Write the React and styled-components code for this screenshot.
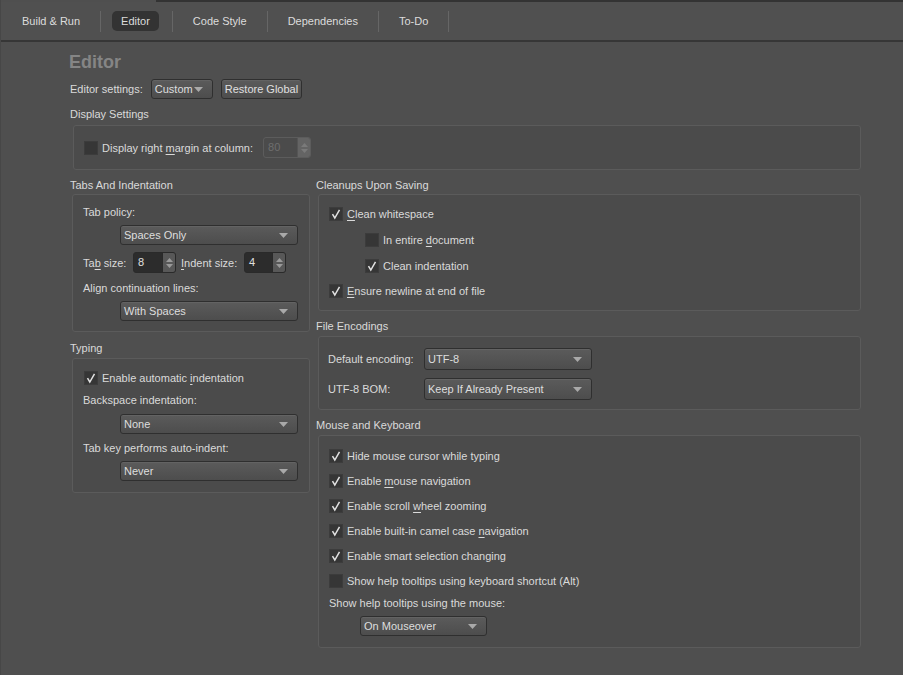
import React from "react";
import styled, { createGlobalStyle } from "styled-components";

const Global = createGlobalStyle`
  html, body { margin: 0; padding: 0; background: #4f4f4f; }
  body { font-family: "Liberation Sans", Arial, sans-serif; font-size: 11px; color: #dadada; }
  u { text-decoration-thickness: 1px; text-underline-offset: 2px; }
`;

const Window = styled.div`
  width: 903px;
  height: 675px;
  background: #4f4f4f;
  display: flex;
  flex-direction: column;
  overflow: hidden;
  border-left: 1px solid #474747;
  box-sizing: border-box;
`;

const TopEdge = styled.div`
  height: 2px;
  display: flex;
  & > span { margin-left: 155px; flex: 1; background: #333; }
`;

const TabBar = styled.div`
  height: 38px;
  display: flex;
  align-items: center;
  padding-left: 1px;
  border-bottom: 2px solid #363636;
  background: #505050;
`;

const Tab = styled.div`
  height: 20px;
  line-height: 20px;
  padding: 0 9px;
  margin: 0 ${p => (p.$active ? "13px" : "11px")} 0 11px;
  border-radius: 5px;
  background: ${p => (p.$active ? "#333333" : "transparent")};
  color: #dcdcdc;
  font-size: 11px;
`;

const Sep = styled.div`
  width: 1px;
  height: 21px;
  background: #666;
`;

const Content = styled.div`
  padding: 9px 0 0 68px;
  width: 792px;
  display: flex;
  flex-direction: column;
`;

const Title = styled.div`
  font-size: 18px;
  font-weight: bold;
  color: #858585;
  height: 22px;
  line-height: 22px;
`;

const Row = styled.div`
  display: flex;
  align-items: center;
  gap: ${p => p.$gap || 0}px;
  height: ${p => p.$h || 20}px;
  margin-top: ${p => p.$mt || 0}px;
  padding-left: ${p => p.$pl || 0}px;
`;

const Label = styled.span`
  color: #dadada;
  white-space: nowrap;
  width: ${p => (p.$w ? p.$w + "px" : "auto")};
  padding-left: ${p => p.$pl || 0}px;
  flex-shrink: 0;
`;

const SectionTitle = styled.div`
  height: 16px;
  line-height: 16px;
  margin-top: ${p => p.$mt || 0}px;
  margin-left: ${p => p.$ml || 0}px;
  color: #dadada;
`;

const Box = styled.div`
  margin-top: ${p => p.$mt || 0}px;
  margin-left: ${p => p.$ml || 2}px;
  border: 1px solid #5b5b5b;
  border-radius: 3px;
  background: #4b4b4b;
  padding: ${p => p.$pad || "0 10px"};
  display: flex;
  flex-direction: column;
  height: ${p => (p.$h ? p.$h + "px" : "auto")};
  box-sizing: border-box;
`;

const Columns = styled.div`
  display: flex;
  gap: 6px;
  margin-top: 7px;
`;

const Column = styled.div`
  display: flex;
  flex-direction: column;
  width: ${p => (p.$w ? p.$w + "px" : "auto")};
  flex: ${p => (p.$w ? "none" : 1)};
`;

const CheckBoxBox = styled.span`
  width: 14px;
  height: 14px;
  box-sizing: border-box;
  background: #363636;
  border: 1px solid #3c3c3c;
  display: inline-flex;
  align-items: center;
  justify-content: center;
  flex-shrink: 0;
`;

const CheckRow = styled.div`
  display: flex;
  align-items: center;
  gap: 4px;
  height: 16px;
  margin-top: ${p => p.$mt || 0}px;
  margin-left: ${p => p.$ml || 0}px;
`;

function Check({ checked, children, mt, ml }) {
  return (
    <CheckRow $mt={mt} $ml={ml}>
      <CheckBoxBox>
        {checked && (
          <svg width="12" height="12" viewBox="0 0 12 12">
            <path d="M2.5 6.2 L4.8 10 L9.5 1.8" fill="none" stroke="#e2e2e2" strokeWidth="1.5" />
          </svg>
        )}
      </CheckBoxBox>
      <Label>{children}</Label>
    </CheckRow>
  );
}

const ComboBox = styled.div`
  width: ${p => p.$w}px;
  height: ${p => p.$h || 20}px;
  box-sizing: border-box;
  border: 1px solid #2f2f2f;
  border-radius: 3px;
  background: linear-gradient(#5b5b5b, #4d4d4d);
  box-shadow: inset 0 1px 0 #636363;
  display: flex;
  align-items: center;
  padding: 0 9px 0 3px;
  margin-left: ${p => p.$ml || 0}px;
  margin-top: ${p => p.$mt || 0}px;
  flex-shrink: 0;
  & > span { flex: 1; white-space: nowrap; color: #dedede; }
`;

function Combo({ w, h, ml, mt, children }) {
  return (
    <ComboBox $w={w} $h={h} $ml={ml} $mt={mt}>
      <span>{children}</span>
      <svg width="9" height="5" viewBox="0 0 9 5">
        <path d="M0 0 H9 L4.5 5 Z" fill="#a9a9a9" />
      </svg>
    </ComboBox>
  );
}

const Button = styled.div`
  height: 20px;
  box-sizing: border-box;
  border: 1px solid #2f2f2f;
  border-radius: 3px;
  background: linear-gradient(#5b5b5b, #4d4d4d);
  box-shadow: inset 0 1px 0 #636363;
  padding: 0 3px;
  line-height: 18px;
  color: #e0e0e0;
`;

const SpinBox = styled.div`
  width: ${p => p.$w}px;
  height: 21px;
  box-sizing: border-box;
  border: 1px solid ${p => (p.$disabled ? "#5c5c5c" : "#2a2a2a")};
  border-radius: 3px;
  background: ${p => (p.$disabled ? "#4b4b4b" : "#2c2c2c")};
  display: flex;
  overflow: hidden;
  flex-shrink: 0;
  & > span { flex: 1; padding-left: 4px; line-height: 19px; color: ${p => (p.$disabled ? "#6e6e6e" : "#e0e0e0")}; }
`;

const SpinButtons = styled.div`
  width: 12px;
  background: ${p => (p.$disabled ? "#646464" : "#585858")};
  display: flex;
  align-items: center;
  justify-content: center;
  border-left: 1px solid ${p => (p.$disabled ? "#555" : "#2a2a2a")};
`;

function Spin({ w, value, disabled }) {
  const c = disabled ? "#7a7a7a" : "#9a9a9a";
  return (
    <SpinBox $w={w} $disabled={disabled}>
      <span>{value}</span>
      <SpinButtons $disabled={disabled}>
        <svg width="7" height="12" viewBox="0 0 7 12">
          <path d="M0 5 L3.5 1 L7 5 Z" fill={c} />
          <path d="M0 7 L3.5 11 L7 7 Z" fill={c} />
        </svg>
      </SpinButtons>
    </SpinBox>
  );
}

const tabs = ["Build & Run", "Editor", "Code Style", "Dependencies", "To-Do"];

export default function App() {
  return (
    <>
      <Global />
      <Window>
        <TopEdge><span /></TopEdge>
        <TabBar>
          {tabs.map(t => (
            <React.Fragment key={t}>
              <Tab $active={t === "Editor"}>{t}</Tab>
              <Sep />
            </React.Fragment>
          ))}
        </TabBar>
        <Content>
          <Title>Editor</Title>
          <Row $gap={8} $mt={6} $pl={1}>
            <Label>Editor settings:</Label>
            <Combo w={62}>Custom</Combo>
            <Button>Restore Global</Button>
          </Row>
          <SectionTitle $mt={7} $ml={1}>Display Settings</SectionTitle>
          <Box $mt={3} $ml={4} $h={45} $pad="0 10px">
            <Row $h={43} $gap={10}>
              <Check>Display right <u>m</u>argin at column:</Check>
              <Spin w={48} value="80" disabled />
            </Row>
          </Box>
          <Columns>
            <Column $w={241}>
              <SectionTitle $ml={1}>Tabs And Indentation</SectionTitle>
              <Box $mt={1} $ml={3} $h={138} $pad="9px 10px 0">
                <Row $h={16}><Label>Tab policy:</Label></Row>
                <Combo w={178} ml={37} mt={5}>Spaces Only</Combo>
                <Row $h={21} $mt={7}>
                  <Label $w={50}>Ta<u>b</u> size:</Label>
                  <Spin w={43} value="8" />
                  <Label $w={63} $pl={5}><u>I</u>ndent size:</Label>
                  <Spin w={42} value="4" />
                </Row>
                <Row $h={16} $mt={7}><Label>Align continuation lines:</Label></Row>
                <Combo w={178} ml={37} mt={5}>With Spaces</Combo>
              </Box>
              <SectionTitle $ml={1} $mt={8}>Typing</SectionTitle>
              <Box $mt={2} $ml={3} $h={135} $pad="11px 10px 0">
                <Check checked ml={1}>Enable automatic <u>i</u>ndentation</Check>
                <Row $h={16} $mt={6}><Label>Backspace indentation:</Label></Row>
                <Combo w={178} ml={37} mt={6}>None</Combo>
                <Row $h={16} $mt={6}><Label>Tab key performs auto-indent:</Label></Row>
                <Combo w={178} ml={37} mt={5}>Never</Combo>
              </Box>
            </Column>
            <Column>
              <SectionTitle>Cleanups Upon Saving</SectionTitle>
              <Box $mt={1} $ml={2} $h={117} $pad="11px 10px 0">
                <Check checked>
                  <u>C</u>lean whitespace
                </Check>
                <Check ml={36} mt={10}>In entire <u>d</u>ocument</Check>
                <Check checked ml={36} mt={10}>Clean indentation</Check>
                <Check checked mt={9}><u>E</u>nsure newline at end of file</Check>
              </Box>
              <SectionTitle $mt={7}>File Encodings</SectionTitle>
              <Box $mt={2} $ml={2} $h={74} $pad="11px 9px 0">
                <Row $h={22}>
                  <Label $w={96}>Default encoding:</Label>
                  <Combo w={168} h={22}>UTF-8</Combo>
                </Row>
                <Row $h={22} $mt={8}>
                  <Label $w={96}>UTF-8 BOM:</Label>
                  <Combo w={168} h={22}>Keep If Already Present</Combo>
                </Row>
              </Box>
              <SectionTitle $mt={7}>Mouse and Keyboard</SectionTitle>
              <Box $mt={2} $ml={2} $h={213} $pad="12px 10px 0">
                <Check checked>Hide mouse cursor while typing</Check>
                <Check checked mt={9}>Enable <u>m</u>ouse navigation</Check>
                <Check checked mt={9}>Enable scroll <u>w</u>heel zooming</Check>
                <Check checked mt={9}>Enable built-in camel case <u>n</u>avigation</Check>
                <Check checked mt={9}>Enable smart selection changing</Check>
                <Check mt={9}>Show help tooltips using keyboard shortcut (Alt)</Check>
                <Row $h={16} $mt={6}><Label>Show help tooltips using the mouse:</Label></Row>
                <Combo w={127} ml={31} mt={5}>On Mouseover</Combo>
              </Box>
            </Column>
          </Columns>
        </Content>
      </Window>
    </>
  );
}
